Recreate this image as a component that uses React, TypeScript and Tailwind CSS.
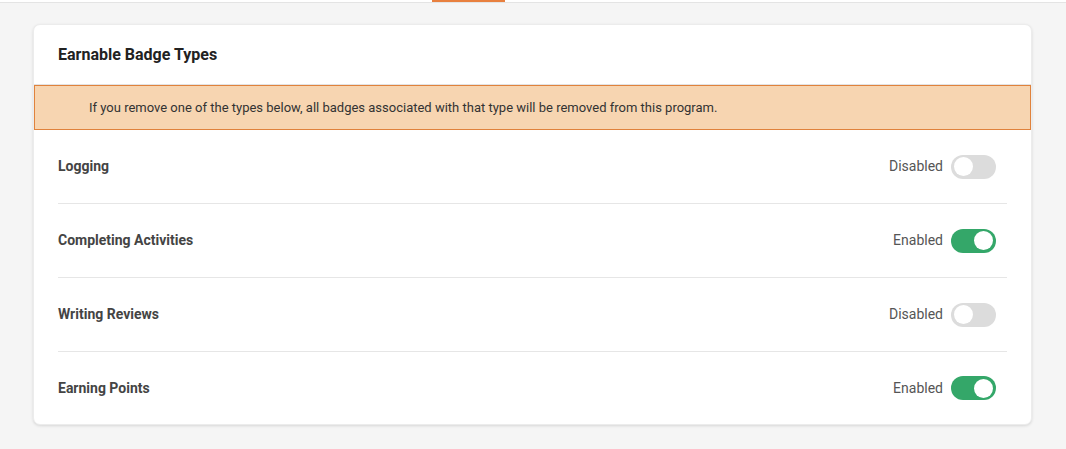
import React from "react";

const rows = [
  { label: "Logging", on: false },
  { label: "Completing Activities", on: true },
  { label: "Writing Reviews", on: false },
  { label: "Earning Points", on: true },
];

function Toggle({ on }: { on: boolean }) {
  return (
    <div
      className={
        "flex h-[24px] w-[45px] items-center rounded-full px-[3px] " +
        (on ? "justify-end bg-[#34a769]" : "justify-start bg-[#dcdcdc]")
      }
    >
      <div className="h-[19px] w-[19px] rounded-full bg-white" />
    </div>
  );
}

export default function App() {
  return (
    <div
      className="min-h-[449px] w-full bg-[#f5f5f5]"
      style={{ fontFamily: "Roboto, 'Noto Sans', Arial, sans-serif" }}
    >
      <div className="flex h-[3px] border-b border-[#e4e4e4] bg-white pl-[432px]">
        <div className="h-[2px] w-[73px] bg-[#e8803f]" />
      </div>
      <div className="pl-[33px] pt-[21px] pb-[22px] pr-[34px]">
        <div className="overflow-hidden rounded-[7px] bg-white shadow-[0_1px_3px_rgba(0,0,0,0.12)] border border-[#ececec]">
          <div className="flex h-[60px] items-center border-b border-[#e3e3e3] px-[24px]">
            <h2 className="text-[16px] font-bold text-[#222]">Earnable Badge Types</h2>
          </div>
          <div className="flex h-[45px] items-center border border-[#e0823c] bg-[#f7d5b1] pl-[54px]">
            <p className="text-[13px] text-[#333]">
              If you remove one of the types below, all badges associated with that type will be removed from this program.
            </p>
          </div>
          <div className="px-[24px]">
            {rows.map((r, i) => (
              <div
                key={r.label}
                className={
                  "flex items-center justify-between pr-[11px] " +
                  (i < rows.length - 1 ? "h-[74px] border-b border-[#e6e6e6]" : "h-[72px]")
                }
              >
                <span className="text-[14px] font-bold text-[#444]">{r.label}</span>
                <div className="flex items-center gap-[8px]">
                  <span className="text-[14px] text-[#555]">{r.on ? "Enabled" : "Disabled"}</span>
                  <Toggle on={r.on} />
                </div>
              </div>
            ))}
          </div>
        </div>
      </div>
    </div>
  );
}
